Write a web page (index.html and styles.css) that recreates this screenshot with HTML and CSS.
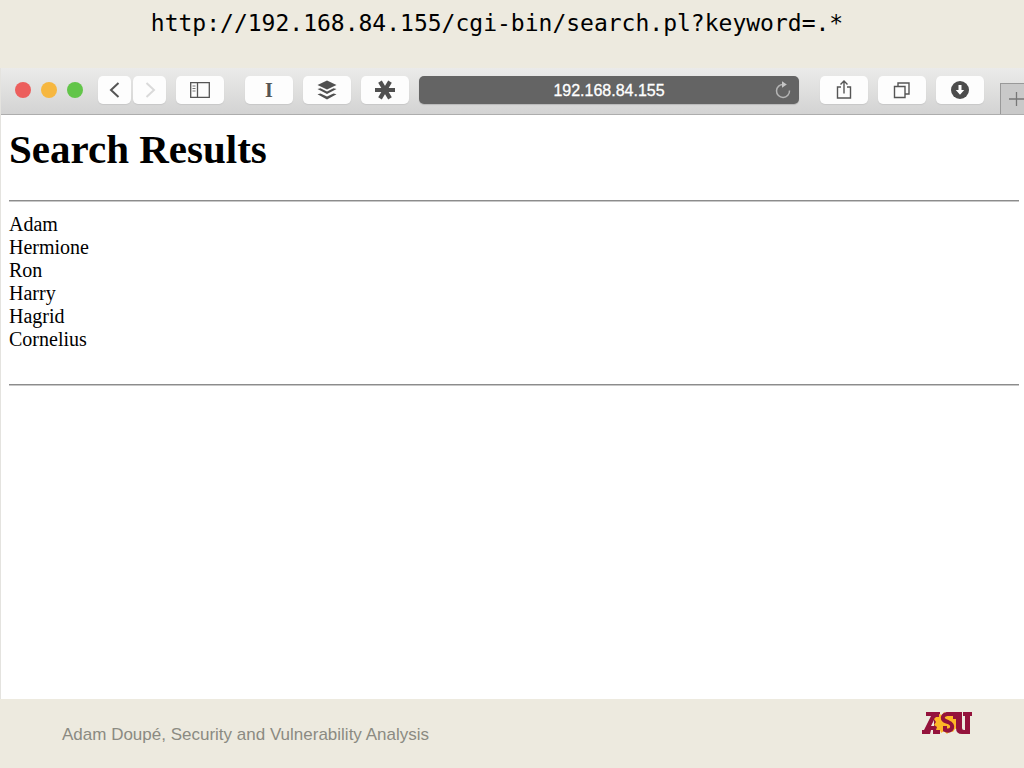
FILE: index.html
```
<!DOCTYPE html>
<html lang="en">
<head>
    <meta charset="UTF-8">
    <meta name="viewport" content="width=device-width, initial-scale=1.0">
    <title>Search Results</title>
    <link rel="stylesheet" href="styles.css">
</head>
<body>
    <header class="slide-header">http://192.168.84.155/cgi-bin/search.pl?keyword=.*</header>

    <div class="browser">
        <div class="toolbar">
            <div class="lights">
                <span class="light red"></span>
                <span class="light yellow"></span>
                <span class="light green"></span>
            </div>
            <div class="nav-buttons">
                <button type="button" class="tool" aria-label="Back">
                    <svg width="16" height="20" viewBox="0 0 16 20"><path d="M11.500 3 L4 10 L11.500 17" fill="none" stroke="#555" stroke-width="2"/></svg>
                </button>
                <button type="button" class="tool" aria-label="Forward" disabled>
                    <svg width="16" height="20" viewBox="0 0 16 20"><path d="M4.500 3 L12 10 L4.500 17" fill="none" stroke="#dadada" stroke-width="2"/></svg>
                </button>
            </div>
            <button type="button" class="tool wide" aria-label="Sidebar">
                <svg width="20" height="16" viewBox="0 0 20 16">
                    <path d="M.7 .7 H19.300 V15.300 H.7 Z M7.500 .7 V15.300" fill="none" stroke="#555" stroke-width="1.300"/>
                    <path d="M2.500 4 H5.500 M2.500 6.500 H5.500 M2.500 9 H5.500" stroke="#777" stroke-width="1"/>
                </svg>
            </button>
            <div class="extensions">
                <button type="button" class="tool wide serif">I</button>
                <button type="button" class="tool wide" aria-label="Layers">
                    <svg width="20" height="20" viewBox="0 0 20 20">
                        <path d="M10 .5 L19.500 5 L10 9.500 L.5 5 Z" fill="#505050"/>
                        <path d="M.5 9 L3.500 8.200 L10 11.400 L16.500 8.200 L19.500 9 L10 14 Z" fill="#505050"/>
                        <path d="M.5 14.200 L3.500 13.400 L10 16.600 L16.500 13.400 L19.500 14.200 L10 19.500 Z" fill="#505050"/>
                    </svg>
                </button>
                <button type="button" class="tool wide" aria-label="Asterisk">
                    <svg width="20" height="20" viewBox="0 0 20 20"><path d="M0 10 H20 M5 1.600 L15 18.400 M15 1.600 L5 18.400" stroke="#505050" stroke-width="4.200"/></svg>
                </button>
            </div>
            <div class="address">
                <input type="text" class="address-input" value="192.168.84.155" aria-label="Address">
                <button type="button" class="reload" aria-label="Reload">
                    <svg width="16" height="18" viewBox="0 0 16 18">
                        <path d="M8.500 3.500 A6.500 6.500 0 1 0 14.500 9.500" fill="none" stroke="#b5b5b5" stroke-width="1.500"/>
                        <path d="M7 .3 L11.800 3.500 L7 6.800 Z" fill="#c4c4c4"/>
                    </svg>
                </button>
            </div>
            <div class="actions">
                <button type="button" class="tool wide" aria-label="Share">
                    <svg width="16" height="20" viewBox="0 0 16 20"><path d="M5 7 H1.500 V18 H14.500 V7 H11 M8 13.500 V1 M4.500 4.500 L8 1 L11.500 4.500" fill="none" stroke="#555" stroke-width="1.400"/></svg>
                </button>
                <button type="button" class="tool wide" aria-label="Tabs">
                    <svg width="18" height="18" viewBox="0 0 18 18"><path d="M1.500 5.500 H12 V16.500 H1.500 Z M5 5 V2 H16 V13 H12.500" fill="none" stroke="#555" stroke-width="1.400"/></svg>
                </button>
                <button type="button" class="tool wide" aria-label="Downloads">
                    <svg width="18" height="18" viewBox="0 0 18 18">
                        <circle cx="9" cy="9" r="9" fill="#4c4c4c"/>
                        <path d="M7.500 4 H10.500 V9 H13.200 L9 13.800 L4.800 9 H7.500 Z" fill="#fff"/>
                    </svg>
                </button>
            </div>
            <button type="button" class="new-tab" aria-label="New tab">
                <svg width="15" height="16" viewBox="0 0 15 16"><path d="M0 8 H15 M7.500 1 V15" stroke="#777" stroke-width="1.300"/></svg>
            </button>
        </div>

        <main class="page">
            <h1>Search Results</h1>
            <hr>
            <ul class="results">
                <li>Adam</li>
                <li>Hermione</li>
                <li>Ron</li>
                <li>Harry</li>
                <li>Hagrid</li>
                <li>Cornelius</li>
            </ul>
            <hr>
        </main>
    </div>

    <footer class="slide-footer">
        <span class="credit">Adam Doupé, Security and Vulnerability Analysis</span>
        <svg class="logo" width="50" height="24" viewBox="0 0 50 24" role="img" aria-label="ASU">
            <!-- A -->
            <path d="M4 1 H18 V23 H11 V19 H9 L8 23 H0 V19 H2 L9 5 H4 Z M12 9 L9 15 H12 Z" fill="#94133c" fill-rule="evenodd"/>
            <!-- sunburst -->
            <path d="M14 6 L17 6 L17 3 L20 4 L22 1 L25 3 L28 1 L30 3 L33 2 L34 5 L37 6 L35 9 L38 12 L35 14 L36 17 L33 18 L31 21 L28 20 L25 23 L22 20 L19 22 L18 19 L14 19 L15 16 L12 14 L14 11 L12 8 Z" fill="#fdb827"/>
            <!-- S -->
            <path d="M33 8 V3 H25 Q20 4 21 8 Q22 10 26 11 Q31 13 30 17 Q28 21 23 19 V15" fill="none" stroke="#94133c" stroke-width="4"/>
            <!-- U -->
            <path d="M32 1 H40 V17 Q40 19 42 19 H43 V5 H41 V1 H50 V5 H48 V23 H40 Q34 23 34 17 V5 H32 Z" fill="#94133c"/>
        </svg>
    </footer>
</body>
</html>
```

FILE: styles.css
```
* {
    box-sizing: border-box;
}
body {
    margin: 0;
    min-height: 100vh;
    display: flex;
    flex-direction: column;
    background-color: #edeadf;
    font-family: "Liberation Sans", Arial, sans-serif;
}
.slide-header {
    height: 68px;
    padding: 9px 30px 0 0;
    font-family: "DejaVu Sans Mono", monospace;
    font-size: 23px;
    line-height: 28px;
    text-align: center;
    color: #000;
}
.browser {
    flex: 1;
    display: flex;
    flex-direction: column;
    background-color: #fff;
    border-left: 1px solid #e4e3df;
}
.toolbar {
    height: 47px;
    padding: 0 0 2px 14px;
    display: flex;
    align-items: center;
    background: linear-gradient(#ebebea, #d3d3d3);
    border-bottom: 1px solid #adadad;
}
.lights {
    display: flex;
    gap: 10px;
    margin-right: 15px;
}
.light {
    width: 16px;
    height: 16px;
    border-radius: 50%;
}
.red {
    background-color: #ec5f5d;
}
.yellow {
    background-color: #f6b740;
}
.green {
    background-color: #62c549;
}
button {
    padding: 0;
    border: none;
    font-family: inherit;
}
.tool {
    width: 33px;
    height: 28px;
    display: flex;
    align-items: center;
    justify-content: center;
    background-color: #fdfdfd;
    border-radius: 5px;
    box-shadow: 0 1px 1px #c8c8c8;
}
.wide {
    width: 48px;
}
.serif {
    font-family: "Liberation Serif", serif;
    font-size: 20px;
    font-weight: bold;
    color: #555;
}
.nav-buttons {
    display: flex;
    gap: 2px;
    margin-right: 10px;
}
.extensions {
    display: flex;
    gap: 10px;
    margin: 0 10px 0 21px;
}
.address {
    flex: 1;
    height: 28px;
    display: flex;
    align-items: center;
    padding: 0 8px;
    background-color: #646464;
    border-radius: 5px;
    box-shadow: 0 1px 1px #b8b8b8;
}
.address-input {
    flex: 1;
    min-width: 0;
    padding: 2px 0 0 16px;
    border: none;
    background: none;
    font-family: "Liberation Sans", Arial, sans-serif;
    font-size: 16px;
    text-align: center;
    color: #fff;
    -webkit-text-stroke: 0.3px #fff;
}
.reload {
    display: flex;
    background: none;
}
.actions {
    display: flex;
    gap: 10px;
    margin: 0 16px 0 21px;
}
.new-tab {
    width: 24px;
    height: 31px;
    align-self: flex-end;
    margin-bottom: -2px;
    display: flex;
    align-items: center;
    justify-content: flex-end;
    background-color: #c9c9c9;
    border-left: 1px solid #999;
    border-top: 1px solid #999;
    overflow: hidden;
}
.page {
    padding: 11px 5px 0 8px;
    font-family: "Liberation Serif", "Times New Roman", serif;
    font-size: 20px;
    line-height: 23px;
    color: #000;
}
.page h1 {
    margin: 0 0 27px;
    font-size: 41px;
    line-height: 47px;
}
.page hr {
    height: 2px;
    margin: 0;
    border: none;
    border-top: 1px solid #8c8c8c;
    border-bottom: 1px solid #c8c8c8;
}
.results {
    list-style: none;
    margin: 11px 0 33px;
    padding: 0;
}
.slide-footer {
    height: 69px;
    padding: 0 52px 0 62px;
    display: flex;
    align-items: flex-start;
    justify-content: space-between;
}
.credit {
    padding-top: 26px;
    font-size: 17px;
    line-height: 20px;
    color: #8b8a82;
}
.logo {
    margin-top: 12px;
}
```
